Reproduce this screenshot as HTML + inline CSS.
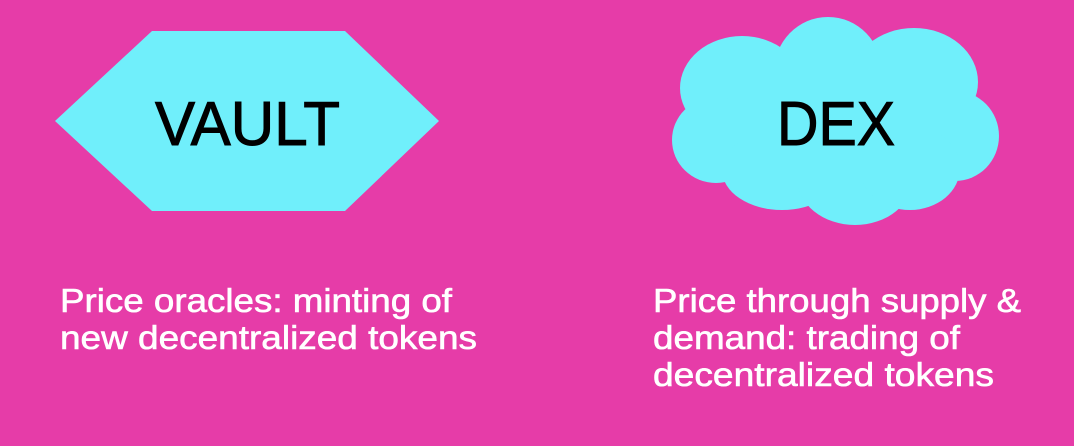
<!DOCTYPE html>
<html><head><meta charset="utf-8"><style>
html,body{margin:0;padding:0;background:#e63ca8;}
svg{display:block}
</style></head><body>
<svg width="1074" height="446" viewBox="0 0 1074 446" xmlns="http://www.w3.org/2000/svg">
<rect width="1074" height="446" fill="#e63ca8"/>
<polygon points="55,121 152,31 345,31 439,121 345,211 152,211" fill="#70effb"/>
<g fill="#70effb">
<ellipse cx="742" cy="88" rx="62" ry="52"/>
<ellipse cx="828" cy="72" rx="54" ry="55"/>
<ellipse cx="914" cy="82" rx="64" ry="54"/>
<ellipse cx="955" cy="136" rx="44" ry="45"/>
<ellipse cx="716" cy="140" rx="44" ry="43"/>
<ellipse cx="782" cy="170" rx="60" ry="40"/>
<ellipse cx="855" cy="178" rx="58" ry="47"/>
<ellipse cx="910" cy="168" rx="50" ry="42"/>
<rect x="740" y="80" width="200" height="100"/>
</g>
<g font-family="Liberation Sans, sans-serif" fill="#000" stroke="#000" stroke-width="1" font-size="62">
<text x="155" y="145" textLength="185" lengthAdjust="spacingAndGlyphs">VAULT</text>
<text x="777" y="145" textLength="118" lengthAdjust="spacingAndGlyphs">DEX</text>
</g>
<g font-family="Liberation Sans, sans-serif" fill="#fff" stroke="#fff" stroke-width="0.6" font-size="33">
<text x="60" y="312" textLength="392" lengthAdjust="spacingAndGlyphs">Price oracles: minting of</text>
<text x="60" y="349" textLength="417" lengthAdjust="spacingAndGlyphs">new decentralized tokens</text>
<text x="653" y="312" textLength="368" lengthAdjust="spacingAndGlyphs">Price through supply &amp;</text>
<text x="653" y="349" textLength="307" lengthAdjust="spacingAndGlyphs">demand: trading of</text>
<text x="653" y="386" textLength="341" lengthAdjust="spacingAndGlyphs">decentralized tokens</text>
</g>
</svg>
</body></html>
